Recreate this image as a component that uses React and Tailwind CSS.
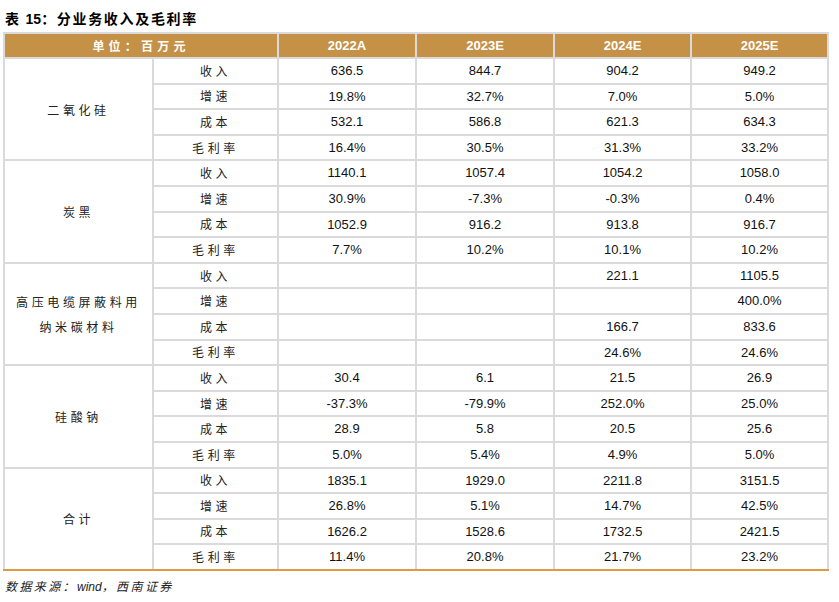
import React from 'react';

const groups = [
  { name: ['二氧化硅'], rows: [
    ['收入', '636.5', '844.7', '904.2', '949.2'],
    ['增速', '19.8%', '32.7%', '7.0%', '5.0%'],
    ['成本', '532.1', '586.8', '621.3', '634.3'],
    ['毛利率', '16.4%', '30.5%', '31.3%', '33.2%'],
  ] },
  { name: ['炭黑'], rows: [
    ['收入', '1140.1', '1057.4', '1054.2', '1058.0'],
    ['增速', '30.9%', '-7.3%', '-0.3%', '0.4%'],
    ['成本', '1052.9', '916.2', '913.8', '916.7'],
    ['毛利率', '7.7%', '10.2%', '10.1%', '10.2%'],
  ] },
  { name: ['高压电缆屏蔽料用', '纳米碳材料'], rows: [
    ['收入', '', '', '221.1', '1105.5'],
    ['增速', '', '', '', '400.0%'],
    ['成本', '', '', '166.7', '833.6'],
    ['毛利率', '', '', '24.6%', '24.6%'],
  ] },
  { name: ['硅酸钠'], rows: [
    ['收入', '30.4', '6.1', '21.5', '26.9'],
    ['增速', '-37.3%', '-79.9%', '252.0%', '25.0%'],
    ['成本', '28.9', '5.8', '20.5', '25.6'],
    ['毛利率', '5.0%', '5.4%', '4.9%', '5.0%'],
  ] },
  { name: ['合计'], rows: [
    ['收入', '1835.1', '1929.0', '2211.8', '3151.5'],
    ['增速', '26.8%', '5.1%', '14.7%', '42.5%'],
    ['成本', '1626.2', '1528.6', '1732.5', '2421.5'],
    ['毛利率', '11.4%', '20.8%', '21.7%', '23.2%'],
  ] },
];

const cjk = "font-['Noto_Sans_CJK_SC',serif]";
const num = "font-['Liberation_Sans',Arial,sans-serif]";
const cell = "border-2 border-[#dadada] text-center p-0";

const App = () => {
  return (
    <div className="w-[839px] h-[602px] bg-white relative overflow-hidden">
      <div className={"pl-[5px] pt-[8px] h-[32px] text-[14px] font-bold text-black tracking-[0.12em] " + cjk}>
        表 <span className={num + " tracking-normal"}>15</span>：分业务收入及毛利率
      </div>
      <table className="table-fixed border-collapse ml-[3px] w-[824px]">
        <colgroup>
          <col className="w-[149px]" />
          <col className="w-[125px]" />
          <col className="w-[138px]" />
          <col className="w-[138px]" />
          <col className="w-[137px]" />
          <col className="w-[137px]" />
        </colgroup>
        <thead>
          <tr className="h-[25px] bg-[#c49147] text-white">
            <th colSpan={2} className={cell + " text-[12px] font-bold tracking-[0.35em] " + cjk}>单位：百万元</th>
            {['2022A', '2023E', '2024E', '2025E'].map(y => (
              <th key={y} className={cell + " text-[13px] font-bold " + num}>{y}</th>
            ))}
          </tr>
        </thead>
        <tbody>
          {groups.map((g, gi) => g.rows.map((r, ri) => {
            const last = gi === groups.length - 1 && ri === 3;
            const lastGroup = gi === groups.length - 1;
            const bb = last ? " border-b-[#dc9b45]" : "";
            return (
              <tr key={gi + '-' + ri} className="h-[25.6px]">
                {ri === 0 &&
                  <td rowSpan={4} className={cell + (lastGroup ? " border-b-[#dc9b45]" : "") + " text-[12px] text-[#222] tracking-[0.3em] leading-[25px] " + cjk}>
                    {g.name.map(n => <div key={n}>{n}</div>)}
                  </td>}
                <td className={cell + bb + " text-[12px] text-[#222] tracking-[0.3em] " + cjk}>{r[0]}</td>
                {r.slice(1).map((v, i) => (
                  <td key={i} className={cell + bb + " text-[13px] text-[#111] " + num}>{v}</td>
                ))}
              </tr>
            );
          }))}
        </tbody>
      </table>
      <div className={"pl-[5px] pt-[6px] text-[12px] italic text-[#222] tracking-[0.2em] " + cjk}>
        数据来源：<span className={num + " tracking-normal"}>wind</span>，西南证券
      </div>
    </div>
  );
};

export default App;
